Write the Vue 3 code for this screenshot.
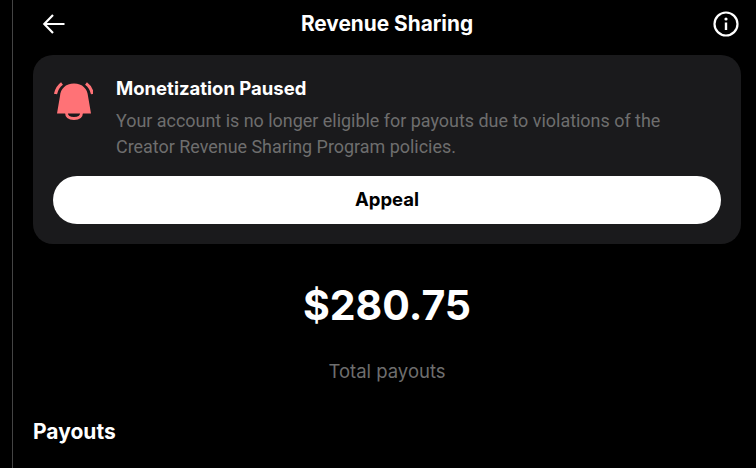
<template>
  <div class="page">
    <div class="column">
      <header class="top-bar">
        <button class="icon-btn back" aria-label="Back">
          <svg width="24" height="24" viewBox="0 0 24 24" fill="none" stroke="#fff" stroke-width="2.2">
            <path d="M23.500 12H4M12 3 3.300 12l8.700 9" />
          </svg>
        </button>
        <h1 class="title">Revenue Sharing</h1>
        <button class="icon-btn info" aria-label="Info">
          <svg width="26" height="26" viewBox="0 0 26 26" fill="none">
            <circle cx="13" cy="13" r="11.500" stroke="#fff" stroke-width="2.200" />
            <circle cx="13" cy="8" r="1.600" fill="#fff" />
            <path d="M13 11.500V19" stroke="#fff" stroke-width="2.400" />
          </svg>
        </button>
      </header>

      <section class="notice">
        <div class="notice-row">
          <svg class="bell" width="40" height="40" viewBox="4 5 40 40" fill="none" stroke="#ff7276">
            <path fill="#ff7276" stroke="none" d="M25 7.500c-8.500 0-13.500 5.500-14 12.500L8 37.500h34L39 20C38.500 13 33.500 7.500 25 7.500z" />
            <path stroke-width="2.800" d="M17.500 37c0 4 3.500 5.500 7.500 5.500s7.500-1.500 7.500-5.500" />
            <path stroke-width="3.200" d="M6.500 18c1-4.500 3-8 6.500-10.500M43.500 18c-1-4.500-3-8-6.500-10.500" />
          </svg>
          <div class="notice-text">
            <h2 class="notice-title">Monetization Paused</h2>
            <p class="notice-body">Your account is no longer eligible for payouts due to violations of the Creator Revenue Sharing Program policies.</p>
          </div>
        </div>
        <button class="appeal">Appeal</button>
      </section>

      <div class="amount">$280.75</div>
      <div class="amount-label">Total payouts</div>
      <h2 class="payouts">Payouts</h2>
    </div>
  </div>
</template>

<script setup>
</script>

<style>
html, body {
  margin: 0;
  background: #000;
}
</style>

<style scoped>
.page {
  width: 756px;
  height: 468px;
  overflow: hidden;
  background: #000;
  font-family: Inter, "Liberation Sans", sans-serif;
  color: #fff;
  padding-left: 12px;
  box-sizing: border-box;
}
.column {
  height: 100%;
  border-left: 1px solid #444;
  padding: 0 15px 0 20px;
}
.top-bar {
  height: 55px;
  display: flex;
  align-items: flex-start;
  justify-content: space-between;
}
.icon-btn {
  background: none;
  border: 0;
  padding: 0;
  display: flex;
}
.back {
  margin: 12px 0 0 8px;
}
.info {
  margin: 11px 2px 0 0;
}
.title {
  margin: 12px 4px 0 0;
  font-size: 20.800px;
  line-height: 24px;
  font-weight: 700;
}
.notice {
  height: 189px;
  box-sizing: border-box;
  background: #1a1a1c;
  border-radius: 20px;
  padding: 20px;
  display: flex;
  flex-direction: column;
  justify-content: space-between;
}
.notice-row {
  display: flex;
  gap: 23px;
}
.bell {
  flex: none;
  margin-top: 6px;
}
.notice-title {
  margin: 0 0 8px;
  font-size: 18.500px;
  line-height: 24px;
  font-weight: 700;
}
.notice-body {
  margin: 0;
  font-family: Roboto, sans-serif;
  font-size: 17.930px;
  line-height: 26px;
  color: #6e6e6e;
}
.notice-text {
  margin-top: 1px;
}
.appeal {
  height: 48px;
  border: 0;
  border-radius: 24px;
  background: #fff;
  color: #000;
  padding-bottom: 4px;
  font: 700 18.500px Inter, "Liberation Sans", sans-serif;
}
.amount {
  margin-top: 31px;
  text-align: center;
  font-size: 41px;
  line-height: 60px;
  font-weight: 700;
}
.amount-label {
  margin-top: 24px;
  text-align: center;
  font-size: 18.500px;
  line-height: 24px;
  color: #6e6e6e;
}
.payouts {
  margin: 37px 0 0;
  font-size: 21px;
  line-height: 24px;
  font-weight: 700;
}
</style>
